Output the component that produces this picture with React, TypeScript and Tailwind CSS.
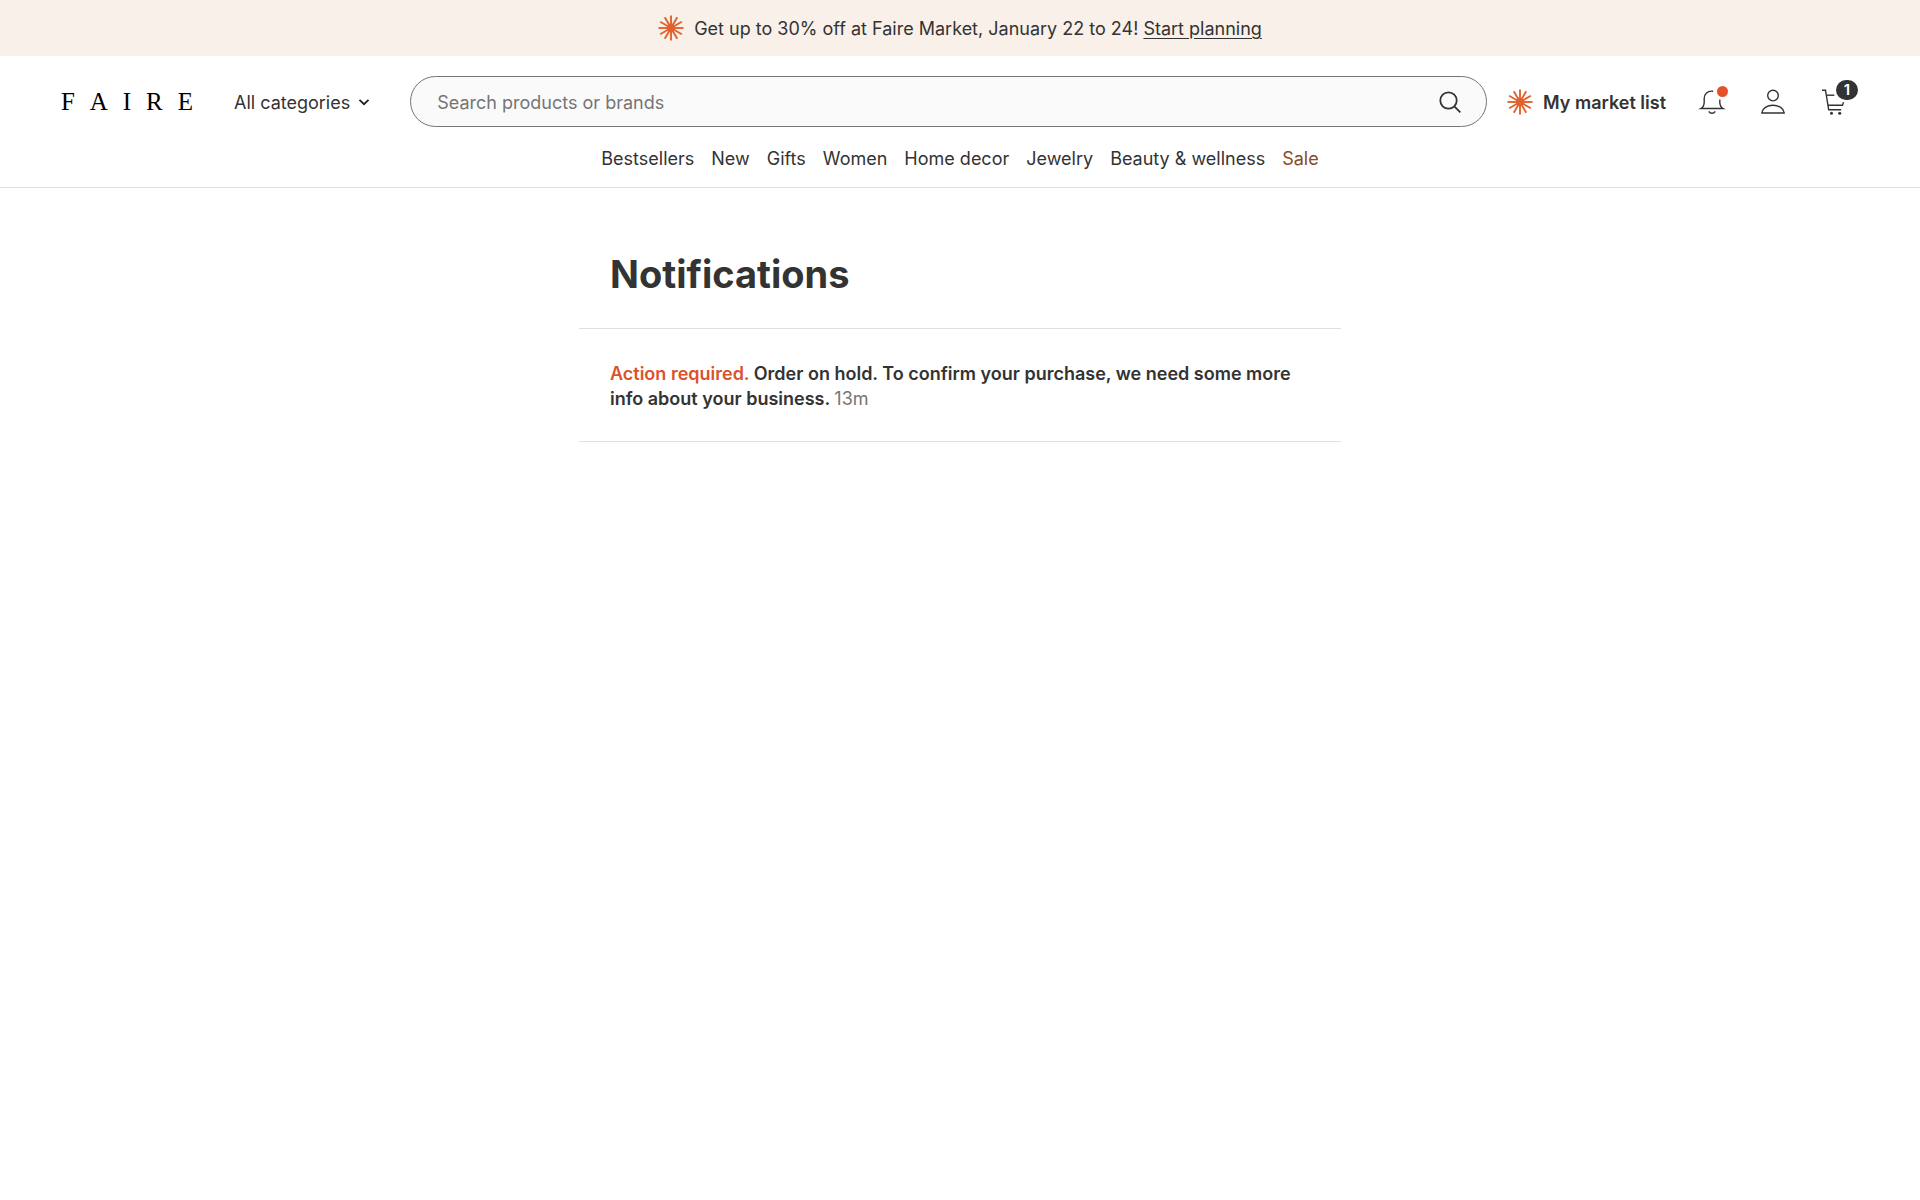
const navItems = [
  "Bestsellers",
  "New",
  "Gifts",
  "Women",
  "Home decor",
  "Jewelry",
  "Beauty & wellness",
];

const rays = [0, 30, 60, 90, 120, 150, 180, 210, 240, 270, 300, 330];

function Starburst() {
  return (
    <svg className="size-[26px] shrink-0" viewBox="0 0 26 26" aria-hidden="true">
      <circle cx="13" cy="13" r="4.4" fill="#e0622f" />
      {rays.map((angle) => (
        <path
          key={angle}
          d="M13 13V0.5"
          stroke="#e0622f"
          strokeWidth="1.9"
          transform={`rotate(${angle} 13 13)`}
        />
      ))}
    </svg>
  );
}

function Chevron() {
  return (
    <svg className="size-3" viewBox="0 0 12 12" fill="none" stroke="#222" strokeWidth="1.8" aria-hidden="true">
      <path d="M1.5 3.8 6 8.2l4.5-4.4" />
    </svg>
  );
}

function SearchIcon() {
  return (
    <svg className="size-6" viewBox="0 0 24 24" fill="none" stroke="#333" strokeWidth="1.8" aria-hidden="true">
      <circle cx="10.5" cy="10.5" r="8.2" />
      <path d="m16.3 16.3 6 6" />
    </svg>
  );
}

function BellIcon() {
  return (
    <svg className="size-7" viewBox="0 0 28 28" fill="none" stroke="#333" strokeWidth="1.4" aria-hidden="true">
      <path d="M15.2 3.2C9.3 2.5 6.2 6 6.2 10.500v3.700c0 2.800-.7 4.800-3.400 6.300h22.400c-2.700-1.500-3.400-3.500-3.400-6.300v-2.600" />
      <path d="M10.8 23.300c.7 1.300 1.800 2 3.200 2s2.500-.7 3.200-2" />
    </svg>
  );
}

function UserIcon() {
  return (
    <svg className="size-7" viewBox="0 0 28 28" fill="none" stroke="#333" strokeWidth="1.4" aria-hidden="true">
      <circle cx="14" cy="7.600" r="5.300" />
      <path d="M2.700 25c.6-4.600 5.300-7.700 11.300-7.700s10.700 3.100 11.300 7.700z" strokeLinejoin="round" />
    </svg>
  );
}

function CartIcon() {
  return (
    <svg className="size-7" viewBox="0 0 28 28" fill="none" stroke="#333" strokeWidth="1.4" aria-hidden="true">
      <path d="M2 2.200h3.500l3.200 19.600h12.500" />
      <path d="M6.400 7.200h8" />
      <path d="M8 17.200h14.500l1-3" />
      <circle cx="11.500" cy="25.200" r="1.500" fill="#333" stroke="none" />
      <circle cx="19.700" cy="25.200" r="1.500" fill="#333" stroke="none" />
    </svg>
  );
}

export default function App() {
  return (
    <div className="min-h-screen bg-white font-['Inter',sans-serif] text-lg text-[#333]">
      <div className="flex h-14 items-center justify-center gap-2.5 bg-[#f8f0e9]">
        <Starburst />
        <p className="pt-0.5">
          Get up to 30% off at Faire Market, January 22 to 24!{" "}
          <a href="#market" className="underline underline-offset-3">
            Start planning
          </a>
        </p>
      </div>

      <header className="border-b border-[#dfdfdf]">
        <div className="flex items-center pt-5 pr-[72px] pl-[61px]">
          <a
            href="#home"
            aria-label="Faire"
            className="flex w-[132px] justify-between font-['Liberation_Serif',serif] text-[25px] leading-8 text-black"
          >
            {["F", "A", "I", "R", "E"].map((letter) => (
              <span key={letter}>{letter}</span>
            ))}
          </a>
          <button type="button" className="ml-[41px] flex items-center gap-2 whitespace-nowrap">
            <span className="pt-0.5">All categories</span>
            <Chevron />
          </button>
          <form className="ml-10 flex h-[51px] flex-1 items-center rounded-full border border-[#757575] bg-[#fafafa] pr-6 pl-[26px]">
            <input
              type="text"
              aria-label="Search products or brands"
              placeholder="Search products or brands"
              className="min-w-0 flex-1 bg-transparent pt-0.5 outline-none placeholder:text-[#757575]"
            />
            <button type="button" aria-label="Search">
              <SearchIcon />
            </button>
          </form>
          <a href="#list" className="ml-5 flex items-center gap-2.5 font-semibold whitespace-nowrap">
            <Starburst />
            <span className="pt-0.5">My market list</span>
          </a>
          <div className="ml-8 flex items-center gap-[33px]">
            <button type="button" aria-label="Notifications" className="relative">
              <BellIcon />
              <span className="absolute -top-0.5 -right-0.5 size-[11px] rounded-full bg-[#e2512a]" />
            </button>
            <button type="button" aria-label="Account">
              <UserIcon />
            </button>
            <button type="button" aria-label="Cart, 1 item" className="relative">
              <CartIcon />
              <span className="absolute -top-2 -right-2.5 flex h-5 w-[22px] items-center justify-center rounded-full bg-[#333] text-[15px] font-semibold text-white">
                1
              </span>
            </button>
          </div>
        </div>
        <nav className="flex h-[60px] items-center justify-center gap-[17px] pt-1">
          {navItems.map((item) => (
            <a key={item} href="#category">
              {item}
            </a>
          ))}
          <a href="#sale" className="text-[#8a4a26]">
            Sale
          </a>
        </nav>
      </header>

      <main className="mx-auto max-w-[762px]">
        <h1 className="border-b border-[#dfdfdf] px-[31px] pt-[61px] pb-[29px] text-[38px] leading-[50px] font-bold">
          Notifications
        </h1>
        <a
          href="#order"
          className="block border-b border-[#dfdfdf] px-[31px] pt-8 pb-[30px] leading-[25px] font-semibold"
        >
          <span className="text-[#d9532c]">Action required.</span> Order on hold. To confirm your
          purchase, we need some more info about your business.{" "}
          <span className="font-normal text-[#757575]">13m</span>
        </a>
      </main>
    </div>
  );
}
